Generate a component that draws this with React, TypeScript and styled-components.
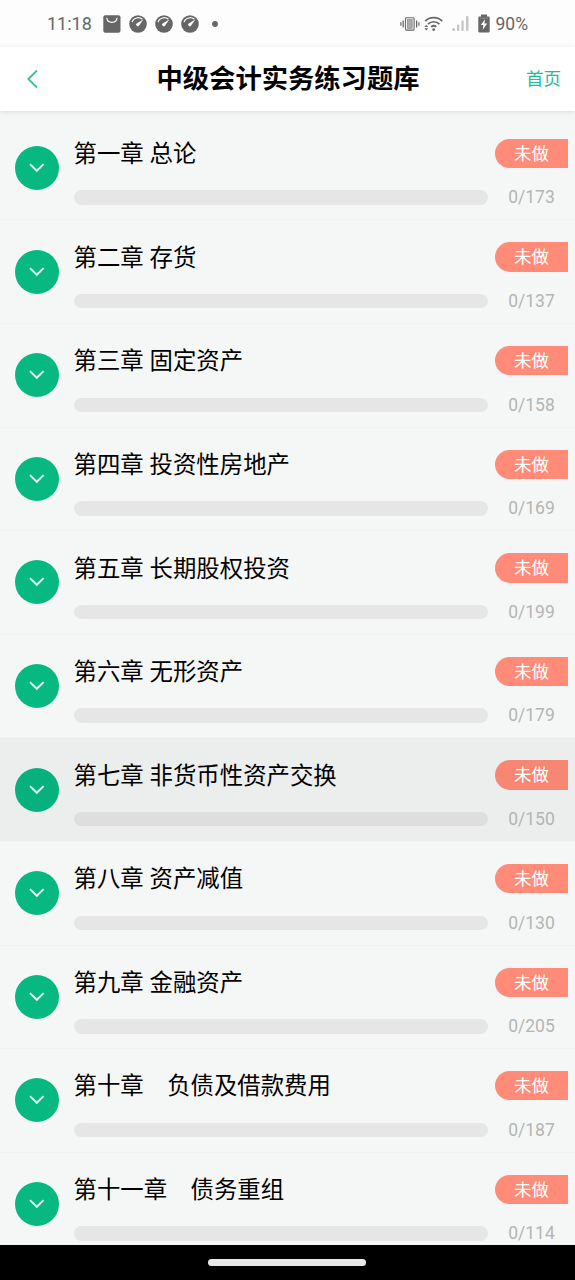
import React from "react";
import styled, { createGlobalStyle } from "styled-components";

const GlobalStyle = createGlobalStyle`
  *, *::before, *::after { box-sizing: border-box; }
  body {
    margin: 0;
    background: #f5f7f7;
    font-family: Roboto, "Noto Sans CJK SC", sans-serif;
    color: #000;
  }
`;

const Screen = styled.div`
  width: 575px;
  height: 1280px;
  display: flex;
  flex-direction: column;
  overflow: hidden;
  background: #f5f7f7;
`;

const StatusBar = styled.div`
  flex: none;
  height: 47px;
  padding: 0 47px;
  display: flex;
  align-items: center;
  justify-content: space-between;
  background: #fdfdfd;
  color: #666;
  font-size: 18px;
`;

const StatusGroup = styled.div`
  display: flex;
  align-items: center;
  height: 47px;
`;

const Clock = styled.span`
  width: 55.5px;
  line-height: 24px;
  padding-top: 1px;
`;

const Battery = styled.span`
  font-size: 17.5px;
  line-height: 24px;
  padding-top: 1px;
`;

const StatusIcon = styled.svg<{ $gap: number }>`
  display: block;
  flex: none;
  margin-right: ${(p) => p.$gap}px;
`;

const NavBar = styled.header`
  flex: none;
  height: 64px;
  display: grid;
  grid-template-columns: 100.5px 1fr 99.5px;
  align-items: center;
  background: #fff;
  box-shadow: 0 1px 5px rgba(0, 0, 0, 0.1);
  z-index: 1;
`;

const BackButton = styled.button`
  border: 0;
  padding: 0 0 0 26px;
  background: none;
  display: flex;
`;

const PageTitle = styled.h1`
  margin: 0;
  text-align: center;
  font-size: 26.3px;
  line-height: 40px;
  font-weight: 700;
  white-space: nowrap;
`;

const HomeLink = styled.a`
  padding-right: 14px;
  text-align: right;
  font-size: 17.5px;
  line-height: 26px;
  color: #1fbb9c;
`;

const ChapterList = styled.main`
  flex: 1;
  min-height: 0;
  overflow: hidden;
  padding-top: 5.9px;
`;

const Chapter = styled.section<{ $pressed: boolean }>`
  height: 103.58px;
  display: grid;
  grid-template-columns: 44px 414.4px 73px;
  column-gap: 14.8px;
  padding-left: 14.8px;
  align-items: center;
  border-bottom: 1px solid #f0f3f2;
  background: ${(p) => (p.$pressed ? "#eceeed" : "#f5f7f7")};
`;

const Toggle = styled.button<{ $pressed: boolean }>`
  width: 44px;
  height: 44px;
  padding: 0;
  border: 0;
  border-radius: 50%;
  display: flex;
  align-items: center;
  justify-content: center;
  background: ${(p) => (p.$pressed ? "#07b17e" : "#07b981")};
`;

const Details = styled.div`
  height: 100%;
  padding-top: 19.3px;
`;

const ChapterTitle = styled.h2`
  margin: 0;
  height: 36px;
  font-size: 23.4px;
  line-height: 36px;
  font-weight: 400;
  white-space: pre;
`;

const Track = styled.div<{ $pressed: boolean }>`
  height: 14.4px;
  margin-top: 18.3px;
  border-radius: 8px;
  background: ${(p) => (p.$pressed ? "#dddedd" : "#e6e6e6")};
`;

const Status = styled.div`
  width: 73px;
  height: 100%;
  margin-left: -7.8px;
  padding-top: 22px;
`;

const Badge = styled.div<{ $pressed: boolean }>`
  height: 29.4px;
  border-radius: 15px 0 0 15px;
  background: ${(p) => (p.$pressed ? "#f78673" : "#ff8b78")};
  color: #fff;
  font-size: 17.5px;
  line-height: 30px;
  text-align: center;
`;

const Count = styled.div`
  margin-top: 17.2px;
  padding-right: 13.2px;
  text-align: right;
  font-size: 17.5px;
  line-height: 24px;
  color: #b3b5b4;
`;

const SystemNav = styled.footer`
  flex: none;
  height: 35px;
  display: flex;
  justify-content: center;
  padding: 14px 1px 0 0;
  background: #000;
  z-index: 1;
`;

const HomeHandle = styled.div`
  width: 158px;
  height: 7px;
  border-radius: 4px;
  background: #e8e8e8;
`;

const BagIcon = () => (
  <StatusIcon $gap={8} width="18" height="18" viewBox="0 0 18 18">
    <rect x="0.3" y="0.3" width="17.2" height="17.4" rx="2" fill="#666" />
    <path d="M3.7 2.8c.7 6.2 9.7 6.2 10.4 0" fill="none" stroke="#fdfdfd" strokeWidth="1.2" />
  </StatusIcon>
);

const GaugeIcon = ({ gap }: { gap: number }) => (
  <StatusIcon $gap={gap} width="18" height="18" viewBox="0 0 18 18">
    <circle cx="9" cy="9" r="8.8" fill="#666" />
    <path d="M3 7.2C4.3 2.6 10 1.5 13.4 4.2" fill="none" stroke="#fdfdfd" strokeWidth="1.2" />
    <path d="M14.3 4.4 10.3 10.3a1.6 1.6 0 1 1-2.2-2.1z" fill="#fdfdfd" />
  </StatusIcon>
);

const VibrateIcon = () => (
  <StatusIcon $gap={4} width="20" height="16" viewBox="0 0 20 16" fill="none" stroke="#666">
    <rect x="5.5" y="1.7" width="8.6" height="12.4" rx="1" strokeWidth="1.1" />
    <rect x="7.4" y="3.5" width="4.8" height="8.8" fill="#aaa" stroke="#888" strokeWidth=".7" />
    <path d="M3.2 4.5v7M16.6 4.5v7" strokeWidth="1.3" />
    <path d="M.9 6.2v3.6M18.9 6.2v3.6" strokeWidth="1.2" />
  </StatusIcon>
);

const WifiIcon = () => (
  <StatusIcon $gap={8} width="20" height="16" viewBox="0 0 20 16" fill="none" stroke="#666">
    <path d="M1.2 5.2C5.7.4 13.7.4 18.2 5.2" strokeWidth="1.7" />
    <path d="M4 8.2c3.2-3.3 8.2-3.3 11.4 0" strokeWidth="1.7" />
    <path d="M7.2 10.9c1.5-1.4 3.5-1.4 5 0" strokeWidth="1.7" />
    <circle cx="9.7" cy="13.6" r="1.4" fill="#666" stroke="none" />
    <path d="M.4 10.9 2.3 8.7 4.2 10.9zM.4 12.3 2.3 14.5 4.2 12.3z" fill="#666" stroke="none" />
  </StatusIcon>
);

const SignalIcon = () => (
  <StatusIcon $gap={9} width="17" height="17" viewBox="0 0 17 17" fill="#c6c6c6">
    <circle cx="1.6" cy="14.5" r="1.5" />
    <rect x="5" y="9.5" width="2.3" height="6.5" rx="1" />
    <rect x="9.4" y="5.5" width="2.3" height="10.5" rx="1" />
    <rect x="14" y="1" width="2.5" height="15" rx="1" />
  </StatusIcon>
);

const BatteryIcon = () => (
  <StatusIcon $gap={6} width="12" height="19" viewBox="0 0 12 19">
    <path d="M3 .5h6v2h1.5q1.2 0 1.2 1.2v13.6q0 1.2-1.2 1.2h-9q-1.2 0-1.2-1.2V3.7q0-1.2 1.2-1.2H3z" fill="#666" />
    <path d="M2 4.2h8" stroke="#999" strokeWidth=".7" />
    <path d="M7 5.3 2.8 11h2.5l-.6 4.8L9.2 9.5H6.4z" fill="#fff" />
  </StatusIcon>
);

const chapters = [
  { title: "第一章 总论", total: 173 },
  { title: "第二章 存货", total: 137 },
  { title: "第三章 固定资产", total: 158 },
  { title: "第四章 投资性房地产", total: 169 },
  { title: "第五章 长期股权投资", total: 199 },
  { title: "第六章 无形资产", total: 179 },
  { title: "第七章 非货币性资产交换", total: 150, pressed: true },
  { title: "第八章 资产减值", total: 130 },
  { title: "第九章 金融资产", total: 205 },
  { title: "第十章　负债及借款费用", total: 187 },
  { title: "第十一章　债务重组", total: 114 },
];

export default function App() {
  return (
    <>
      <GlobalStyle />
      <Screen>
        <StatusBar>
          <StatusGroup>
            <Clock>11:18</Clock>
            <BagIcon />
            <GaugeIcon gap={8} />
            <GaugeIcon gap={8} />
            <GaugeIcon gap={13.5} />
            <StatusIcon $gap={0} width="6" height="6" viewBox="0 0 6 6">
              <circle cx="3" cy="3" r="2.9" fill="#666" />
            </StatusIcon>
          </StatusGroup>
          <StatusGroup>
            <VibrateIcon />
            <WifiIcon />
            <SignalIcon />
            <BatteryIcon />
            <Battery>90%</Battery>
          </StatusGroup>
        </StatusBar>
        <NavBar>
          <BackButton aria-label="返回">
            <svg width="13" height="20" viewBox="0 0 13 20" fill="none">
              <path d="M11 1.5 2.3 10 11 18.5" stroke="#35bea3" strokeWidth="1.8" />
            </svg>
          </BackButton>
          <PageTitle>中级会计实务练习题库</PageTitle>
          <HomeLink>首页</HomeLink>
        </NavBar>
        <ChapterList>
          {chapters.map(({ title, total, pressed = false }) => (
            <Chapter key={title} $pressed={pressed}>
              <Toggle $pressed={pressed} aria-label="展开">
                <svg width="16" height="10" viewBox="0 0 16 10" fill="none">
                  <path d="M1 1.1 7.8 7.8 14.6 1.1" stroke="#e4faf2" strokeWidth="1.9" />
                </svg>
              </Toggle>
              <Details>
                <ChapterTitle>{title}</ChapterTitle>
                <Track $pressed={pressed} />
              </Details>
              <Status>
                <Badge $pressed={pressed}>未做</Badge>
                <Count>0/{total}</Count>
              </Status>
            </Chapter>
          ))}
        </ChapterList>
        <SystemNav>
          <HomeHandle />
        </SystemNav>
      </Screen>
    </>
  );
}
